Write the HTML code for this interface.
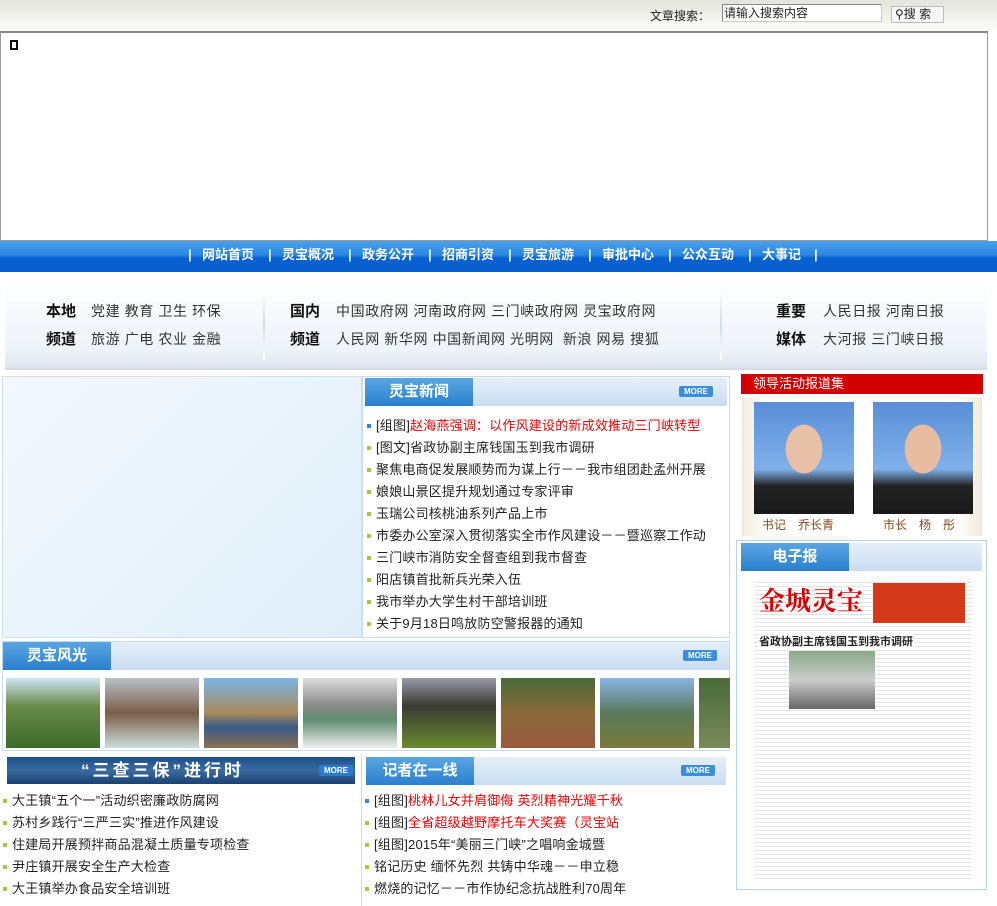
<!DOCTYPE html>
<html><head><meta charset="utf-8"><style>
*{margin:0;padding:0;box-sizing:border-box}
body{width:997px;height:906px;overflow:hidden;background:#fff;font-family:"Liberation Sans","Noto Sans CJK SC",sans-serif;font-size:13px;color:#222;position:relative}
.a{position:absolute}
.top{left:0;top:0;width:997px;height:30px;background:linear-gradient(#e4e4de,#fbfbf8)}
.nav{left:0;top:241px;width:997px;height:31px;background:linear-gradient(#4aa0ec 0,#2a86e0 45%,#0660d4 55%,#0a5fcc 100%);color:#fff;font-weight:bold;font-size:13px;line-height:28px}
.nav span{position:absolute;top:0;white-space:nowrap}
.links{left:5px;top:280px;width:982px;height:90px;background:linear-gradient(#fff,#eef3f9 80%,#dde4ec);border-bottom:2px solid #d6dde4}
.links b{position:absolute;font-size:15px;color:#111}
.links span{position:absolute;font-size:14px;color:#333;letter-spacing:0.6px;white-space:nowrap}
.hd{height:28px;background:linear-gradient(#e6eff9,#c9ddf1);}
.tab{position:absolute;left:4px;top:0;width:108px;height:28px;background:linear-gradient(#5aa6e2,#2a7fcd);color:#fff;font-weight:bold;font-size:15px;text-align:center;line-height:28px}
.more{position:absolute;width:34px;height:11px;background:#3c8ed9;color:#fff;font-size:8px;line-height:11px;text-align:center;border-radius:2px;font-weight:bold}
ul{list-style:none}
li{height:22px;line-height:22px;padding-left:12px;position:relative;white-space:nowrap;font-size:13px;letter-spacing:0.2px}
li:before{content:"";position:absolute;left:3px;top:9px;width:4px;height:4px;background:#a8c63a}
li.bl:before{background:#2a86e0}
.r{color:#e00}
.ph{position:absolute;top:678px;width:94px;height:70px}
</style></head><body>
<div class="a top"></div>
<div class="a" style="left:650px;top:7px;font-size:12px">文章搜索：</div>
<div class="a" style="left:722px;top:4px;width:160px;height:18px;border:1px solid #888;border-right-color:#ccc;border-bottom-color:#ccc;background:#fff;font-size:12px;line-height:16px;padding-left:1px">请输入搜索内容</div>
<div class="a" style="left:891px;top:6px;width:53px;height:17px;border:1px solid #bbb;background:#f6f6f6;font-size:12px;line-height:15px;padding-left:3px">⚲搜 索</div>
<div class="a" style="left:0;top:31px;width:988px;height:210px;border:1px solid #999;border-top:2px solid #888"></div>
<div class="a" style="left:10px;top:40px;width:8px;height:10px;border:2px solid #111;background:#fff"></div>
<div class="a nav">
<span style="left:188px">|</span><span style="left:202px">网站首页</span>
<span style="left:268px">|</span><span style="left:282px">灵宝概况</span>
<span style="left:348px">|</span><span style="left:362px">政务公开</span>
<span style="left:428px">|</span><span style="left:442px">招商引资</span>
<span style="left:508px">|</span><span style="left:522px">灵宝旅游</span>
<span style="left:588px">|</span><span style="left:602px">审批中心</span>
<span style="left:668px">|</span><span style="left:682px">公众互动</span>
<span style="left:748px">|</span><span style="left:762px">大事记</span>
<span style="left:814px">|</span>
</div>
<div class="a links">
<div class="a" style="left:258px;top:10px;width:2px;height:70px;background:linear-gradient(#fff,#d0dceb,#fff)"></div>
<div class="a" style="left:715px;top:10px;width:2px;height:70px;background:linear-gradient(#fff,#d0dceb,#fff)"></div>
<b style="left:41px;top:20px">本地</b><span style="left:86px;top:21px">党建 教育 卫生 环保</span>
<b style="left:41px;top:48px">频道</b><span style="left:86px;top:49px">旅游 广电 农业 金融</span>
<b style="left:285px;top:20px">国内</b><span style="left:331px;top:21px">中国政府网 河南政府网 三门峡政府网 灵宝政府网</span>
<b style="left:285px;top:48px">频道</b><span style="left:331px;top:49px">人民网 新华网 中国新闻网 光明网 &nbsp;新浪 网易 搜狐</span>
<b style="left:771px;top:20px">重要</b><span style="left:818px;top:21px">人民日报 河南日报</span>
<b style="left:771px;top:48px">媒体</b><span style="left:818px;top:49px">大河报 三门峡日报</span>
</div>
<div class="a" style="left:2px;top:376px;width:360px;height:262px;border:1px solid #cfe0ef;background:linear-gradient(135deg,#f4f9fd,#dfeef9)"></div>
<div class="a" style="left:362px;top:376px;width:368px;height:262px;border:1px solid #c5dcef">
<div class="hd" style="margin:1px 2px 0 2px;position:relative"><div class="tab" style="left:0">灵宝新闻</div><div class="more" style="left:314px;top:8px">MORE</div></div>
<ul style="margin-top:9px;margin-left:1px">
<li class="bl">[组图]<span class="r">赵海燕强调：以作风建设的新成效推动三门峡转型</span></li>
<li>[图文]省政协副主席钱国玉到我市调研</li>
<li>聚焦电商促发展顺势而为谋上行－－我市组团赴孟州开展</li>
<li>娘娘山景区提升规划通过专家评审</li>
<li>玉瑞公司核桃油系列产品上市</li>
<li>市委办公室深入贯彻落实全市作风建设－－暨巡察工作动</li>
<li>三门峡市消防安全督查组到我市督查</li>
<li>阳店镇首批新兵光荣入伍</li>
<li>我市举办大学生村干部培训班</li>
<li>关于9月18日鸣放防空警报器的通知</li>
</ul></div>
<div class="a" style="left:741px;top:374px;width:242px;height:20px;background:#d20000;color:#fff;font-size:13px;line-height:20px;padding-left:12px">领导活动报道集</div>
<div class="a" style="left:742px;top:398px;width:240px;height:138px;background:linear-gradient(90deg,#f3ead8,#fff 10%,#fff 90%,#f3ead8)"></div>
<div class="a" style="left:754px;top:402px;width:100px;height:112px;background:radial-gradient(ellipse 30px 40px at 50% 42%,#e8c0a8 60%,transparent 62%),linear-gradient(#5a8fd8,#7fb0ea 60%,#222 75%,#1a1a1a)"></div>
<div class="a" style="left:873px;top:402px;width:100px;height:112px;background:radial-gradient(ellipse 30px 40px at 50% 42%,#e8bca0 60%,transparent 62%),linear-gradient(#5a8fd8,#7fb0ea 60%,#222 75%,#1a1a1a)"></div>
<div class="a" style="left:762px;top:516px;color:#8a4a1a;font-size:12px">书记　乔长青</div>
<div class="a" style="left:883px;top:516px;color:#8a4a1a;font-size:12px">市长　杨　彤</div>
<div class="a" style="left:736px;top:540px;width:251px;height:350px;border:1px solid #b9d3ea">
<div class="hd" style="margin:2px 4px 0 4px;position:relative"><div class="tab" style="left:0">电子报</div></div>
<div class="a" style="left:17px;top:38px;width:218px;height:302px;background:repeating-linear-gradient(#fff 0 3px,#e4e4e4 3px 4px)"></div>
<div class="a" style="left:22px;top:40px;color:#d00;font-size:26px;font-weight:bold;font-family:'Noto Serif CJK SC',serif">金城灵宝</div>
<div class="a" style="left:136px;top:42px;width:92px;height:40px;background:#d43a1a"></div>
<div class="a" style="left:22px;top:92px;font-size:11px;font-weight:bold;background:#fff">省政协副主席钱国玉到我市调研</div>
<div class="a" style="left:52px;top:110px;width:86px;height:58px;background:linear-gradient(#8a8,#ccc 50%,#666)"></div>
</div>
<div class="a" style="left:2px;top:641px;width:728px;height:110px;border:1px solid #c5dcef">
<div class="hd" style="margin:0;position:relative"><div class="tab" style="left:0;width:108px">灵宝风光</div><div class="more" style="left:680px;top:8px">MORE</div></div></div>
<div class="ph" style="left:6px;background:linear-gradient(#cfe4f4,#6a8a4a 40%,#3c6a2a)"></div>
<div class="ph" style="left:105px;background:linear-gradient(#b9c0c8,#7a5e48 50%,#cdd)"></div>
<div class="ph" style="left:204px;background:linear-gradient(#7ab4e4,#a88a5a 50%,#3a5a88 70%,#8a7050)"></div>
<div class="ph" style="left:303px;background:linear-gradient(#ddd,#888 40%,#5f8f70 60%,#eee)"></div>
<div class="ph" style="left:402px;background:linear-gradient(#99a,#3a3a32 40%,#6a8a30)"></div>
<div class="ph" style="left:501px;background:linear-gradient(#4a6a3a,#8a6a3a 50%,#9a5a40)"></div>
<div class="ph" style="left:600px;background:linear-gradient(#8ab4e4,#5a7a5a 50%,#7a7a3a)"></div>
<div class="ph" style="left:699px;width:31px;background:linear-gradient(#4a6a3a,#7a8a5a)"></div>
<div class="a" style="left:7px;top:757px;width:348px;height:27px;background:linear-gradient(#1d4f88,#3a6aa0 50%,#1a4070);color:#fff;font-size:17px;font-weight:bold;line-height:27px;padding-left:74px;letter-spacing:3px">“三查三保”进行时</div>
<div class="more" style="left:319px;top:765px;background:#2a7ad0">MORE</div>
<ul class="a" style="left:0;top:790px">
<li>大王镇“五个一”活动织密廉政防腐网</li><li>苏村乡践行“三严三实”推进作风建设</li><li>住建局开展预拌商品混凝土质量专项检查</li><li>尹庄镇开展安全生产大检查</li><li>大王镇举办食品安全培训班</li></ul>
<div class="a" style="left:361px;top:755px;width:1px;height:151px;background:#c5dcef"></div>
<div class="a" style="left:366px;top:757px;width:360px;height:28px" ><div class="hd" style="position:relative;height:28px"><div class="tab" style="left:0">记者在一线</div><div class="more" style="left:315px;top:8px">MORE</div></div></div>
<ul class="a" style="left:362px;top:790px">
<li class="bl">[组图]<span class="r">桃林儿女并肩御侮 英烈精神光耀千秋</span></li>
<li>[组图]<span class="r">全省超级越野摩托车大奖赛（灵宝站</span></li>
<li>[组图]2015年“美丽三门峡”之唱响金城暨</li>
<li>铭记历史 缅怀先烈 共铸中华魂－－申立稳</li>
<li>燃烧的记忆－－市作协纪念抗战胜利70周年</li></ul>
</body></html>
